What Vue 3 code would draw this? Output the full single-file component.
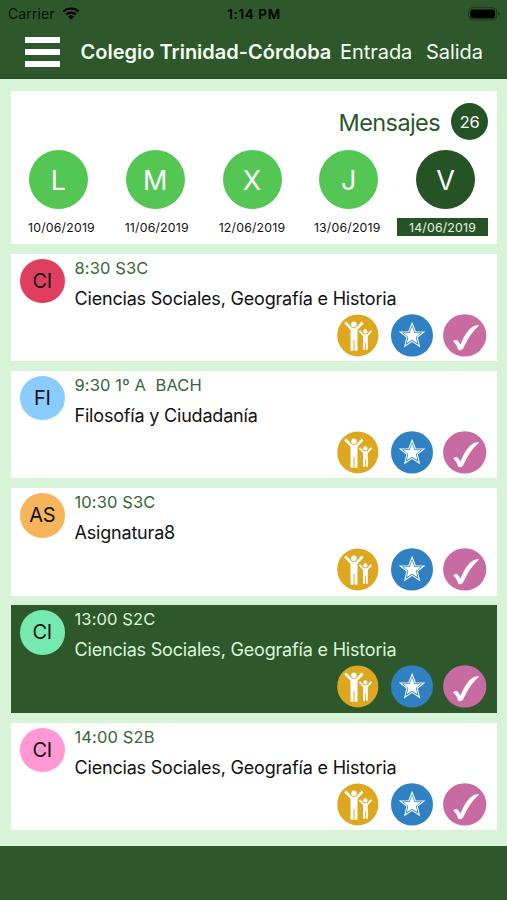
<script setup>
const days = [
  { letter: 'L', date: '10/06/2019' },
  { letter: 'M', date: '11/06/2019' },
  { letter: 'X', date: '12/06/2019' },
  { letter: 'J', date: '13/06/2019' },
  { letter: 'V', date: '14/06/2019', active: true },
]

const lessons = [
  { code: 'CI', color: '#e03e5f', time: '8:30 S3C', name: 'Ciencias Sociales, Geografía e Historia' },
  { code: 'FI', color: '#8accff', time: '9:30 1º A  BACH', name: 'Filosofía y Ciudadanía' },
  { code: 'AS', color: '#f6b55b', time: '10:30 S3C', name: 'Asignatura8' },
  { code: 'CI', color: '#76e9b1', time: '13:00 S2C', name: 'Ciencias Sociales, Geografía e Historia', active: true },
  { code: 'CI', color: '#ff98d4', time: '14:00 S2B', name: 'Ciencias Sociales, Geografía e Historia' },
]
</script>

<template>
  <div class="screen">
    <header class="top">
      <div class="status">
        <div class="carrier">
          <span>Carrier</span>
          <svg class="wifi" viewBox="0 0 18 13">
            <path d="M1.3 4.6a11 11 0 0 1 15.4 0M4.1 7.6a7 7 0 0 1 9.8 0" fill="none" stroke="#000" stroke-width="2.1" />
            <path d="M9 12.6 6.1 9.6a4.2 4.2 0 0 1 5.8 0z" />
          </svg>
        </div>
        <span class="clock">1:14 PM</span>
        <svg class="battery" viewBox="0 0 32 14">
          <rect x=".7" y=".7" width="28" height="12.4" rx="3.6" fill="none" stroke="#000" stroke-opacity=".38" />
          <rect x="2.4" y="2.4" width="24.6" height="9" rx="2" />
          <path d="M30.2 5v4q1.3-.5 1.3-2t-1.3-2z" fill-opacity=".5" />
        </svg>
      </div>
      <nav class="bar">
        <div class="burger"><i /><i /><i /></div>
        <h1>Colegio Trinidad-Córdoba</h1>
        <a class="entrada">Entrada</a>
        <a class="salida">Salida</a>
      </nav>
    </header>

    <main class="content">
      <section class="week">
        <div class="messages">
          <span class="label">Mensajes</span>
          <span class="count">26</span>
        </div>
        <div class="letters">
          <span v-for="d in days" :key="d.letter" class="day" :class="{ active: d.active }">{{ d.letter }}</span>
        </div>
        <div class="dates">
          <span v-for="d in days" :key="d.date" class="date" :class="{ active: d.active }">{{ d.date }}</span>
        </div>
      </section>

      <article v-for="l in lessons" :key="l.time" class="card" :class="{ active: l.active }">
        <span class="avatar" :style="{ background: l.color }">{{ l.code }}</span>
        <div class="body">
          <p class="time">{{ l.time }}</p>
          <p class="name">{{ l.name }}</p>
          <div class="actions">
            <svg class="people" viewBox="0 0 42 43">
              <ellipse cx="20.8" cy="21.4" rx="20.6" ry="21" fill="#dda71f" />
              <g fill="none" stroke="#fff" stroke-linejoin="round">
                <path d="M8.2 8.3 14.6 15.2h4.8l6.2-6.7" stroke-width="2.7" />
                <path d="M22.4 16.8l4.2 4.6h3.6l4.2-4.6" stroke-width="1.9" />
              </g>
              <g fill="#fff">
                <circle cx="16.9" cy="10.2" r="2.8" />
                <path d="M13.5 14.2h7v22.6h-3V26h-1v10.8h-3z" />
                <circle cx="28.3" cy="17.4" r="2.1" />
                <path d="M26 20.6h4.8v15.2h-2V28.5h-.8v7.3h-2z" />
              </g>
            </svg>
            <svg class="star" viewBox="0 0 42 43">
              <ellipse cx="21" cy="21.4" rx="21" ry="21.2" fill="#2f81c4" />
              <path d="M21.1 9.2 24.4 17.7 33 18 26.3 23.3 28.4 32.2 21.1 27.3 13.8 32.2 15.9 23.3 9.2 18 17.8 17.7z" fill="none" stroke="#fff" stroke-width="1.1" />
              <path d="M21.1 12.6 23.5 19 29.6 19.2 24.9 22.9 26.3 29.1 21.1 25.7 15.9 29.1 17.3 22.9 12.6 19.2 18.7 19z" fill="#fff" />
            </svg>
            <svg class="check" viewBox="0 0 44 43">
              <ellipse cx="21.7" cy="21.4" rx="21.6" ry="21.2" fill="#c96ba3" />
              <path d="M10.2 27.3q2.5-2.1 4.4-.8 1.6 1.2 2.7 4.3Q23.4 16 30.4 12.3 33.5 10.9 36.2 11.4 27.5 18 20 34.8q-2.3 2.2-4.6 1.3Q14.3 31 10.2 27.3z" fill="#fff" />
            </svg>
          </div>
        </div>
      </article>
    </main>
    <footer class="bottom" />
  </div>
</template>

<style>
body { background: #2e582c; }
</style>

<style scoped>
.screen {
  display: flex;
  flex-direction: column;
  width: 507px;
  height: 900px;
  overflow: hidden;
  background: #d8f4d8;
  font-family: Inter, "Liberation Sans", sans-serif;
  color: #111;
}
.top {
  flex: none;
  height: 79px;
  background: #2e582c;
  box-sizing: border-box;
  border-bottom: 1px solid #264d25;
}
.status {
  display: grid;
  grid-template-columns: 1fr auto 1fr;
  align-items: center;
  height: 27px;
  padding: 0 7px 0 8px;
  font-size: 14px;
  color: #000;
}
.carrier { display: flex; align-items: center; gap: 7px; letter-spacing: 0.1px; }
.carrier span { opacity: .82; }
.wifi { width: 18px; height: 13px; }
.clock { font-weight: 600; font-size: 13.5px; letter-spacing: 0.6px; }
.battery { width: 32px; height: 14px; justify-self: end; }
.bar {
  display: flex;
  align-items: center;
  height: 50px;
  padding-left: 25px;
  color: #f4fff2;
  white-space: nowrap;
}
.burger { display: flex; flex-direction: column; gap: 6px; width: 35px; margin-right: 20.5px; }
.burger i { height: 6.2px; background: #fff; }
h1 { margin: 0; width: 259.5px; font-size: 20px; font-weight: 600; }
.bar a { font-size: 20px; letter-spacing: -0.05px; }
.entrada { width: 86px; }

.content { flex: none; height: 767px; box-sizing: border-box; padding: 12px 10px 0 11px; }
.week {
  height: 153px;
  margin-bottom: 9.6px;
  background: #fff;
  box-sizing: border-box;
  padding-top: 12px;
}
.messages { display: flex; justify-content: flex-end; align-items: center; height: 37px; padding-right: 9px; }
.label { color: #2b572b; font-size: 23.5px; letter-spacing: -0.6px; line-height: 37px; padding-top: 1px; margin-right: 11px; }
.count {
  width: 37px;
  height: 37px;
  line-height: 38px;
  border-radius: 50%;
  background: #265326;
  color: #fff;
  text-align: center;
  font-size: 16.5px;
  letter-spacing: -0.3px;
}
.letters { display: flex; justify-content: space-between; margin: 9.5px 22px 0 18px; }
.day {
  width: 59px;
  height: 59px;
  line-height: 61px;
  border-radius: 50%;
  background: #53c653;
  color: #fff;
  text-align: center;
  font-size: 27px;
}
.day.active { background: #265326; }
.dates { display: flex; justify-content: space-between; margin: 9px 9px 0 5px; }
.date { width: 91px; height: 18.5px; line-height: 19px; text-align: center; font-size: 12.3px; letter-spacing: 0.2px; }
.date.active { background: #265326; color: #e6f5e4; }

.card {
  display: flex;
  height: 107.5px;
  margin-bottom: 9.8px;
  box-sizing: border-box;
  padding: 5px 10px 0 9px;
  background: #fff;
}
.avatar {
  flex: none;
  width: 44.5px;
  height: 44.5px;
  line-height: 45px;
  border-radius: 50%;
  text-align: center;
  font-size: 20px;
  letter-spacing: -0.3px;
  margin-right: 10px;
}
.body { flex: 1; min-width: 0; white-space: pre; }
.body p { margin: 0; }
.time { height: 20px; line-height: 18px; font-size: 16.5px; letter-spacing: 0.12px; color: #37653a; }
.name { height: 35px; line-height: 40px; font-size: 18px; letter-spacing: -0.19px; }
.active .time, .active .name { color: #dcf6d9; }
.card.active { background: #2e582c; }
.card.active .avatar { color: #06150b; }
.actions { display: flex; justify-content: flex-end; }
.actions svg { height: 43px; display: block; }
.people { width: 42px; margin-right: 12px; }
.star { width: 42px; margin-right: 10.5px; }
.check { width: 44px; }
.bottom { flex: 1; background: #2e582c; }
</style>
